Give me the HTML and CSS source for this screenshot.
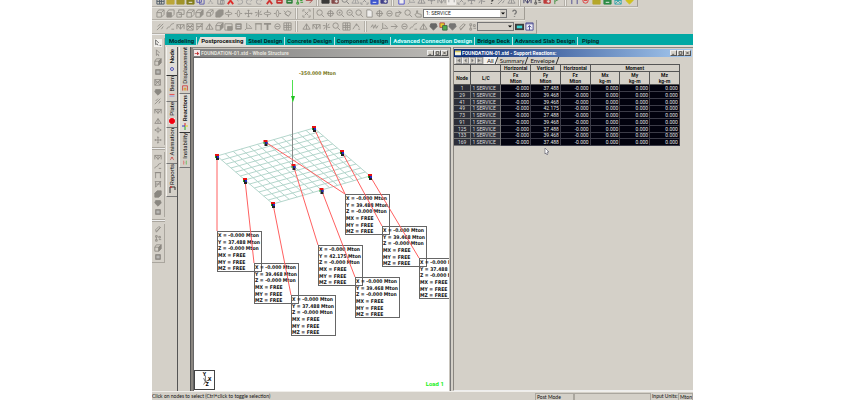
FILE: index.html
```html
<!DOCTYPE html>
<html lang="en">
<head>
<meta charset="utf-8">
<title>FOUNDATION-01.std - Support Reactions</title>
<link rel="stylesheet" href="styles.css">
</head>
<body>
<div class="app">
  <header class="bars">
    <div class="bar bar-top">
      <div class="group g16" data-icons="grid:#345 folder:#b8a020 folder:#998a10 save:#777000 copy:#44a cut:#999 paste:#888 cross:#e01010 undo:#999 redo:#999 redo:#999 cross:#d01818 box:#c01010 box:#107020 nodes:#109010 arrow:#a33"></div>
      <i class="sep"></i>
      <div class="group g7" data-icons="print:#222 camera:#733 lens:#777 tri:#999 frame:#888 save:#2340d0 camera:#2a2a80"></div>
      <i class="sep"></i>
      <div class="group g12" data-icons="page:#33c axis:#999 tri:#888 node:#888 truss:#888 lit:#999 frame:#888 move:#888 sym:#888 help:#222 slash:#888 tri:#888"></div>
      <i class="sep"></i>
      <div class="group g4" data-icons="truss:#225 nodes:#444 camera:#b22 flag:#383"></div>
      <i class="sep"></i>
      <div class="group g6b" data-icons="portal:#338 ring:#e02020 folder:#b0a010 save:#108030 mesh:#18a0a8 gem:#d0c000"></div>
    </div>
    <div class="bar bar-view">
      <div class="group g14" data-icons="cube cubeb cubes cube cubed cubeo solid rotx roty move sym rotx roty iso"></div>
      <i class="sep"></i>
      <div class="group g1" data-icons="frame"></div>
      <i class="line"></i>
      <div class="group g11" data-icons="lens target zoomin zoomout lens page target ring pan lens hand"></div>
      <div class="combo"><select aria-label="Load case"><option>1: SERVICE</option></select><svg class="chev" viewBox="0 0 6 6"><path d="M1 2h4L3 4z"/></svg></div>
      <div class="group g1 wide" data-icons="help:#666"></div>
    </div>
    <div class="bar bar-geom">
      <div class="group g14" data-icons="slash sweep truss mesh trussb tri cubed plate box axis portal tee ring grid"></div>
      <i class="sep"></i>
      <div class="group g6" data-icons="tri truss sym lens grid peak"></div>
      <i class="sep"></i>
      <div class="group g11" data-icons="wave axis arrow ring sweep tri gem:#555 traffic gem:#666 clip nodes"></div>
      <div class="combo small"><select aria-label="Group"><option></option></select><svg class="chev" viewBox="0 0 6 6"><path d="M1 2h4L3 4z"/></svg></div>
      <div class="group g2" data-icons="screen win"></div>
    </div>
  </header>

  <div class="body">
    <aside class="tools">
      <div class="stack" data-icons="pick:#555 cursor cubed box mesh gem slash truss tri rotx move"></div>
      <i class="hsep"></i>
      <div class="stack" data-icons="truss sweep portal trussb solid gem box"></div>
      <i class="hsep"></i>
      <div class="stack last" data-icons="clip nodes cubed box"></div>
    </aside>
    <div class="main">
      <nav class="modes">
        <a href="#">Modeling</a><a href="#" class="on">Postprocessing</a><a href="#">Steel Design</a><a href="#">Concrete Design</a><a href="#">Component Design</a><a href="#" class="hot">Advanced Connection Design</a><a href="#">Bridge Deck</a><a href="#">Advanced Slab Design</a><a href="#">Piping</a>
      </nav>
      <div class="work">
        <nav class="vtabs outer">
          <button class="on n1"><span>Node</span><svg viewBox="0 0 8 8"><circle cx="4" cy="4" r="1.5" fill="none" stroke="#55b"/></svg></button>
          <button class="n2"><span>Beam</span><svg viewBox="0 0 8 8"><path d="M1 3h6" stroke="#e33"/><path d="M1 5h6" stroke="#88d"/></svg></button>
          <button class="n2"><span>Plate</span><svg viewBox="0 0 8 8"><rect x="1" y="1" width="6" height="6" fill="#fff"/><circle cx="4" cy="4" r="3" fill="#f00010"/></svg></button>
          <button class="n4"><span>Animation</span><svg viewBox="0 0 8 8"><path d="M1 7l3-5 3 5M2 3h4" fill="none" stroke="#c33"/></svg></button>
          <button class="n5"><span>Reports</span><svg viewBox="0 0 8 8"><path d="M2 7V1h5v3" fill="none" stroke="#333"/><path d="M2 1h2" stroke="#e22"/></svg></button>
        </nav>
        <nav class="vtabs inner">
          <button class="m1"><span>Displacement</span><svg viewBox="0 0 8 8"><path d="M1 7V1h6v6" fill="none" stroke="#c33"/><path d="M3 7V4h2v3" fill="none" stroke="#d80"/></svg></button>
          <button class="on m2"><span>Reactions</span><svg viewBox="0 0 8 8"><path d="M4 1v3" stroke="#d22"/><path d="M4 4v4" stroke="#2a2"/><path d="M1 4h3" stroke="#33c"/><path d="M4 4h3" stroke="#dc2"/></svg></button>
          <button class="m3"><span>Instability</span><svg viewBox="0 0 8 8"><path d="M2 1v6" stroke="#e44"/><path d="M6 1v6" stroke="#3b3"/><path d="M2 4h4" stroke="#caa"/></svg></button>
        </nav>

        <section class="window model">
          <div class="title off">
            <svg class="appicon" viewBox="0 0 8 8"><rect width="8" height="8" fill="#f4e8e8"/><path d="M1 4h3V2l3 3-3 2V5H1z" fill="#c03030"/></svg>
            <h2>FOUNDATION-01.std - Whole Structure</h2>
            <div class="winbtns"><button aria-label="Minimize"><svg viewBox="0 0 6 6"><path d="M1 5h3"/></svg></button><button aria-label="Maximize"><svg viewBox="0 0 6 6"><path d="M1 1h4v4H1z"/></svg></button><button aria-label="Close"><svg viewBox="0 0 6 6"><path d="M1 1l4 4M5 1L1 5"/></svg></button></div>
          </div>
          <div class="canvas">
            <svg id="scene" class="scene"></svg>
            <svg class="triad" viewBox="0 0 20 20"><path d="M11 5v7l5-3M11 12l-2 3M9 8l2 4" fill="none" stroke="#666"/><text x="8" y="6">Y</text><text x="14" y="11">X</text><text x="11" y="17">Z</text></svg>
            <span class="load">Load 1</span>
          </div>
        </section>

        <section class="window results">
          <div class="title">
            <svg class="appicon" viewBox="0 0 8 8"><path d="M0 1h8v6H0z" fill="#f4f4e0"/><path d="M0 1h8v2H0z" fill="#d8c860"/></svg>
            <h2>FOUNDATION-01.std - Support Reactions:</h2>
            <div class="winbtns"><button aria-label="Minimize"><svg viewBox="0 0 6 6"><path d="M1 5h3"/></svg></button><button aria-label="Maximize"><svg viewBox="0 0 6 6"><path d="M1 1h4v4H1z"/></svg></button><button aria-label="Close"><svg viewBox="0 0 6 6"><path d="M1 1l4 4M5 1L1 5"/></svg></button></div>
          </div>
          <div class="sheets">
            <button class="nav" aria-label="First"><svg viewBox="0 0 6 6"><path d="M1 1v4M5 1L2 3l3 2z"/></svg></button><button class="nav" aria-label="Previous"><svg viewBox="0 0 6 6"><path d="M4 1L2 3l2 2z"/></svg></button><button class="nav" aria-label="Next"><svg viewBox="0 0 6 6"><path d="M2 1l2 2-2 2z"/></svg></button><button class="nav" aria-label="Last"><svg viewBox="0 0 6 6"><path d="M5 1v4M1 1l3 2-3 2z"/></svg></button>
            <a href="#" class="on">All</a><a href="#">Summary</a><a href="#">Envelope</a>
          </div>
          <table>
            <colgroup><col class="c-node"><col class="c-lc"><col><col><col><col><col><col></colgroup>
            <thead>
              <tr><th></th><th></th><th>Horizontal</th><th>Vertical</th><th>Horizontal</th><th colspan="3">Moment</th></tr>
              <tr class="units"><th>Node</th><th>L/C</th><th>Fx<br>Mton</th><th>Fy<br>Mton</th><th>Fz<br>Mton</th><th>Mx<br>kg-m</th><th>My<br>kg-m</th><th>Mz<br>kg-m</th></tr>
            </thead>
            <tbody>
              <tr><th>1</th><th>1 SERVICE</th><td>-0.000</td><td>37.488</td><td>-0.000</td><td>0.000</td><td>0.000</td><td>0.000</td></tr>
              <tr><th>29</th><th>1 SERVICE</th><td>-0.000</td><td>39.468</td><td>-0.000</td><td>0.000</td><td>0.000</td><td>0.000</td></tr>
              <tr><th>41</th><th>1 SERVICE</th><td>-0.000</td><td>39.468</td><td>-0.000</td><td>0.000</td><td>0.000</td><td>0.000</td></tr>
              <tr><th>49</th><th>1 SERVICE</th><td>-0.000</td><td>42.175</td><td>-0.000</td><td>0.000</td><td>0.000</td><td>0.000</td></tr>
              <tr><th>73</th><th>1 SERVICE</th><td>-0.000</td><td>37.488</td><td>-0.000</td><td>0.000</td><td>0.000</td><td>0.000</td></tr>
              <tr><th>91</th><th>1 SERVICE</th><td>-0.000</td><td>39.468</td><td>-0.000</td><td>0.000</td><td>0.000</td><td>0.000</td></tr>
              <tr><th>125</th><th>1 SERVICE</th><td>-0.000</td><td>37.488</td><td>-0.000</td><td>0.000</td><td>0.000</td><td>0.000</td></tr>
              <tr><th>133</th><th>1 SERVICE</th><td>-0.000</td><td>39.468</td><td>-0.000</td><td>0.000</td><td>0.000</td><td>0.000</td></tr>
              <tr><th>169</th><th>1 SERVICE</th><td>-0.000</td><td>37.488</td><td>-0.000</td><td>0.000</td><td>0.000</td><td>0.000</td></tr>
            </tbody>
          </table>
          <svg class="pointer" viewBox="0 0 6 9"><path d="M1 1v6l1-1 1 2 1-1-1-2h2z" fill="#fff" stroke="#556"  stroke-width=".6"/></svg>
        </section>
      </div>
    </div>
  </div>

  <footer class="status">
    <span class="msg">Click on nodes to select (Ctrl+click to toggle selection)</span>
    <span class="cell mode">Post Mode</span>
    <span class="cell blank"></span>
    <span class="lbl">Input Units:</span>
    <span class="cell unit">Mton-m</span>
  </footer>
</div>
<script src="app.js"></script>
</body>
</html>
```
FILE: styles.css
```css
* { box-sizing: border-box; }
body {
  margin: 0;
  background: #fff;
  color: #111;
  font-family: Roboto, "Liberation Sans", sans-serif;
  font-size: 5px;
}
button { margin: 0; padding: 0; border: 0; background: none; font: inherit; color: inherit; }
a { color: inherit; text-decoration: none; }
h2 { margin: 0; font: inherit; }
svg { display: block; }

.app {
  display: flex;
  flex-direction: column;
  height: 100vh;
  margin: 0 153px 0 152px;
  background: #d4d0c8;
  overflow: hidden;
}

/* toolbars */
.bar {
  display: flex;
  align-items: center;
  width: fit-content;
  height: 14px;
  padding: 0 2px 0 4px;
  border-right: 1px solid #a09c94;
  border-bottom: 1px solid #b4b0a8;
  box-shadow: 0 1px #e8e6e0;
}
.bar-top { height: 7px; align-items: flex-end; overflow: hidden; }
.bar-view { height: 13px; }
.group { display: flex; height: 12px; }
.group button { flex: 1; display: grid; place-items: center; }
.group svg { width: 9px; height: 9px; opacity: .85; }
.g1 { width: 10px; }
.g2 { width: 20px; }
.g4 { width: 39px; }
.g6 { width: 60px; }
.g6b { width: 66px; }
.g7 { width: 68px; }
.g11 { width: 107px; }
.g12 { width: 120px; }
.g14 { width: 136px; }
.g16 { width: 158px; }
.wide { width: 15px; }
.sep {
  flex: none;
  width: 3px;
  height: 11px;
  margin: 0 3px;
  border: 1px solid #b4b0a8;
  border-top: 0;
  border-bottom: 0;
  background: #eeece8;
}
.bar-top .sep { margin: 0 2px; }
.line { width: 1px; height: 11px; margin: 0 2px; background: #a8a49c; }
.combo {
  display: flex;
  position: relative;
  width: 84px;
  height: 9px;
  border: 1px solid #777;
  background: #fff;
}
.combo.small { width: 37px; background: #d4d0c8; }
.combo select {
  appearance: none;
  flex: 1;
  min-width: 0;
  padding: 0 2px;
  border: 0;
  border-radius: 0;
  background: none;
  color: #222;
  font: 5px/7px Roboto, sans-serif;
}
.chev {
  position: absolute;
  right: 0;
  top: 0;
  width: 6px;
  height: 7px;
  background: #d4d0c8;
  pointer-events: none;
}

.body { display: flex; flex: 1; min-height: 0; }
.tools { width: 13px; padding-top: 3px; border-top: 1px solid #eee; }
.stack { display: flex; flex-direction: column; height: 107px; border-right: 1px solid #aaa69e; }
.stack button { flex: 1; display: grid; place-items: center; }
.stack svg { width: 8px; height: 8px; }
.hsep { display: block; height: 3px; margin: 2px 0; border: 1px solid #aaa69e; border-width: 1px 0; background: #eee; }
.hsep + .stack { height: 65px; }
.stack.last { height: 39px; border-bottom: 1px solid #aaa69e; }

.main { display: flex; flex-direction: column; flex: 1; min-width: 0; }
.modes {
  display: flex;
  align-items: end;
  height: 11px;
  padding-left: 2px;
  background: #00a8a4;
  font-size: 6px;
  font-weight: 700;
  line-height: 8px;
  white-space: nowrap;
}
.modes a { padding: 0 2px; border-right: 1px solid #bfe6e4; color: #042c2c; }
.modes a.on {
  background: #e4e2dc;
  color: #111;
  clip-path: polygon(3px 0, 100% 0, 100% 100%, 0 100%);
  padding-left: 4px;
}
.modes a.hot { color: #d8ffff; }
.modes a:last-child { border: 0; padding-left: 4px; }

.work { display: flex; flex: 1; min-height: 0; border-top: 2px solid #dedbd5; }
.vtabs { display: flex; flex-direction: column; width: 13px; border-right: 1px solid #555; }
.vtabs button {
  display: flex;
  flex-direction: column;
  align-items: center;
  justify-content: flex-end;
  gap: 1px;
  margin-left: 1px;
  padding-bottom: 2px;
  border-left: 1px solid #f4f2ee;
  border-bottom: 1px solid #777;
  font-size: 6px;
}
.vtabs span { writing-mode: vertical-rl; transform: rotate(180deg); line-height: 8px; white-space: nowrap; }
.vtabs svg { width: 8px; height: 8px; }
.vtabs .on { background: #e0ddd6; font-family: Lato, sans-serif; font-weight: 700; border-bottom-color: #333; }
.n1 { height: 29px; }
.n2 { height: 26px; }
.n4 { height: 36px; }
.n5 { height: 33px; }
.m1 { height: 47px; }
.m2 { height: 39px; }
.m3 { height: 35px; }

/* document windows */
.window { display: flex; flex-direction: column; min-width: 0; border-left: 2px solid #8a8680; border-top: 1px solid #8a8680; }
.model { flex: 259; padding: 1px 1px 0 0; background: #c8c4bc; border-right: 1px solid #777; }
.results { position: relative; flex: 241; padding: 1px 1px 0 0; margin-left: 2px; border-bottom: 1px solid #eee; border-left-width: 1px; }
.title {
  display: flex;
  align-items: center;
  gap: 1px;
  height: 8px;
  flex: none;
  padding: 0 1px;
  background: linear-gradient(90deg, #0a2a74, #a6caf0);
  color: #fff;
  font-weight: 700;
  white-space: nowrap;
}
.title.off { background: linear-gradient(90deg, #808080, #bcbab6); color: #e4e2dc; }
.title h2 { flex: 1; }
.appicon { width: 6px; height: 6px; }
.winbtns { display: flex; }
.winbtns button { width: 7px; height: 6px; background: #d4d0c8; border: 1px solid #eee; border-right-color: #555; border-bottom-color: #555; }
.winbtns svg { width: 5px; height: 4px; }
.winbtns path { fill: none; stroke: #222; }
.canvas { position: relative; flex: 1; min-height: 0; border: 1px solid #666; border-width: 1px 0 0 1px; background: #fff; overflow: hidden; }
.scene { width: 100%; height: 100%; }
.scene text { font: 700 5px "DejaVu Sans Condensed", "Liberation Sans", sans-serif; fill: #111; }
.scene .force { fill: #77771a; }
.scene .mesh { stroke: #b4d6cc; stroke-width: 1; fill: none; }
.scene .leader { stroke: #ff6060; stroke-width: 1; }
.scene .frame { fill: none; stroke: #666; }
.triad { position: absolute; left: 0; bottom: 1px; width: 21px; height: 20px; border: 1px solid #444; background: #fff; }
.triad text { font-size: 6px; font-weight: 700; }
.load { position: absolute; right: 5px; bottom: 4px; color: #20f020; font-size: 6px; font-weight: 700; }

.sheets { display: flex; height: 7px; flex: none; padding-left: 1px; font: 6px/7px Lato, sans-serif; }
.sheets .nav { width: 7px; height: 7px; border: 1px solid #999; border-left-color: #eee; }
.sheets .nav svg { width: 5px; height: 5px; }
.sheets path { fill: #777; stroke: #777; stroke-width: .5; }
.sheets a { position: relative; padding: 0 3px; }
.sheets a::after { content: ""; position: absolute; top: 0; right: 0; width: 1px; height: 7px; background: #333; transform: skewX(-20deg); }
.sheets a.on { background: #f4f2ee; margin-left: 1px; }

table {
  width: 226px;
  max-width: 100%;
  table-layout: fixed;
  border-collapse: collapse;
  border: 1px solid #555;
  border-left: 0;
  line-height: 6px;
}
.c-node { width: 17px; }
.c-lc { width: 30px; }
th, td { padding: 0; height: 7px; overflow: hidden; white-space: nowrap; border: 1px solid #777; border-width: 0 1px 1px 0; }
thead th { font-weight: 700; border-color: #555; }
.units { height: 13px; }
tbody th { background: #2c2e38; color: #dcdcdc; font-weight: 400; border-color: #777; }
tbody th + th { text-align: left; padding-left: 1px; }
tbody td { background: #02020e; color: #e4e4e4; text-align: right; padding-right: 1px; border-color: #3c3c48; }
tbody tr:nth-child(4n) > * { height: 6px; line-height: 5px; }
.pointer { position: absolute; left: 90px; top: 99px; width: 6px; height: 9px; }

.status { display: flex; align-items: center; height: 9px; flex: none; border-top: 1px solid #f0eeea; font-family: Lato, sans-serif; line-height: 7px; white-space: nowrap; }
.msg { flex: 1; }
.cell { height: 7px; padding-left: 1px; border: 1px solid #aaa69e; border-width: 1px 1px 0 1px; overflow: hidden; line-height: 6px; }
.mode { width: 39px; }
.blank { width: 77px; }
.lbl { width: 27px; padding-left: 1px; }
.unit { width: 15px; }
```
FILE: app.js
```js
// Icon shapes on a 10 x 10 grid, drawn with the current colour.
const shapes = {
  grid: '<path d="M1 1h8v8H1zM1 4h8M1 6h8M4 1v8M6 1v8"/>',
  folder: '<path class="f" d="M1 3h3l1 1h4v5H1z"/><path d="M3 6h6"/>',
  save: '<path class="f" d="M1 1h8v8H1z"/><path d="M3 7h4" stroke="#fff"/>',
  copy: '<path d="M1 1h5v6H1zM4 3h5v6H4z"/>',
  cut: '<path d="M3 1l3 6M7 1L4 7M2 8h2M6 8h2"/>',
  paste: '<path d="M2 2h5v7H2zM5 5h4v4H5z"/>',
  cross: '<path d="M2 1l6 8M8 1L2 9" stroke-width="2"/>',
  undo: '<path d="M2 4h4a2 2 0 0 1 0 5H3M4 2L2 4l2 2"/>',
  redo: '<path d="M8 4H4a2 2 0 0 0 0 5h3M6 2l2 2-2 2"/>',
  box: '<path class="f" d="M2 2h6v6H2z"/><path d="M3 4h4M3 6h4" stroke="#ddd"/>',
  nodes: '<path d="M2 2h2v2H2zM6 3h2v2H6zM2 7h2v2H2zM6 7h3M3 4v3"/>',
  arrow: '<path d="M1 5h7M5 2l3 3-3 3"/>',
  print: '<path class="f" d="M1 4h8v4H1z"/><path d="M3 4V1h4v3"/>',
  camera: '<path class="f" d="M1 3h7v5H1z"/><circle cx="6" cy="6" r="2" fill="#ddd"/>',
  lens: '<circle cx="4" cy="4" r="3"/><path d="M6 6l3 3"/>',
  frame: '<path d="M1 3V1h2M7 1h2v2M9 7v2H7M3 9H1V7M3 3l4 4M7 3L3 7"/>',
  page: '<path d="M2 1h4l2 2v6H2z" fill="#f4f4f4"/>',
  axis: '<path d="M3 1v6h6M3 7L1 9M5 3l3 3"/>',
  tri: '<path d="M1 8l4-6 4 6zM5 2v6"/>',
  node: '<path d="M5 1v3M5 7v2M1 5h2M7 5h2"/><circle class="f" cx="5" cy="5" r="1"/>',
  truss: '<path d="M1 8V3h8v5M1 3l4 5 4-5M5 3v5"/>',
  trussb: '<path d="M1 2h8M2 2v7M8 2v7M2 5h6M2 9l6-7"/>',
  lit: '<path d="M0 0h10v10H0z" fill="#f4f2ee" stroke="none"/><path d="M2 7V2h6v5"/>',
  move: '<path d="M5 1v8M1 5h8M4 2l1-1 1 1M4 8l1 1 1-1M2 4L1 5l1 1M8 4l1 1-1 1"/>',
  sym: '<path d="M5 1v8M1 4h3M6 6h3M2 8l2-3M8 2L6 5"/>',
  help: '<path d="M3 3a2 2 0 1 1 3 2L5 6M5 8v1" stroke-width="1.5"/>',
  slash: '<path d="M1 9l7-7M2 5l3-3M6 8l2-3"/>',
  flag: '<path d="M2 9V1l6 2-6 3"/>',
  portal: '<path d="M2 9V2h6v7M1 2h8"/>',
  ring: '<circle cx="5" cy="5" r="3"/><path d="M3 5h4"/>',
  mesh: '<path d="M1 2h7v7H1zM1 9l7-7M1 5h7M1 2l7 7"/>',
  gem: '<path class="f" d="M2 2h6l1 3-4 4-4-4z"/>',
  cube: '<path d="M1 4h5v5H1zM1 4l2-3h6v5L6 9M6 4l3-3"/>',
  cubeb: '<path class="f" d="M1 4h5v5H1z"/><path d="M1 4l2-3h6v5L6 9"/>',
  cubes: '<path d="M1 4h5v5H1zM3 1h6v5H6M3 1v3M3 6h3"/>',
  cubed: '<path d="M1 4h5v5H1zM1 4l2-3h6L6 4"/><path class="f" d="M6 4l3-3v5L6 9z"/>',
  cubeo: '<path d="M2 4l3-3h4v4L6 8H2zM2 4h4v4M6 4l3-3"/>',
  solid: '<path class="f" d="M1 4l3-3h5v5L6 9H1z"/>',
  rotx: '<path d="M1 5c2-2 6-2 8 0-2 2-6 2-8 0M5 1v3M5 6v3"/>',
  roty: '<path d="M5 1c-2 2-2 6 0 8 2-2 2-6 0-8M1 5h2M7 5h2"/>',
  iso: '<path d="M2 5l3-3 4 2-3 4zM2 5l4 3M1 2l2 2"/>',
  target: '<circle cx="5" cy="5" r="3"/><path d="M5 1v8M1 5h8"/>',
  zoomin: '<circle cx="4" cy="4" r="3"/><path d="M6 6l3 3M3 4h2M4 3v2"/>',
  zoomout: '<circle cx="4" cy="4" r="3"/><path d="M6 6l3 3M3 4h2"/>',
  pan: '<path d="M2 8V4h6M5 2l3 2-3 3M2 8h4"/>',
  hand: '<path d="M3 9L1 6l2-1V2h1v3l4 1v3z"/>',
  sweep: '<path d="M1 8c1-4 3-1 4-4s3-1 4-3M6 8h3"/>',
  plate: '<path d="M1 2h8v7H1z"/><path class="f" d="M4 5h5v4H4z"/>',
  tee: '<path d="M1 2h8M5 2v7" stroke-width="2"/>',
  peak: '<path d="M1 8l4-6 3 4M5 2v2M7 8h2"/>',
  wave: '<path d="M1 6l2-3 1 4 2-4 1 4 2-3"/>',
  traffic: '<path d="M1 1h5v5H1z" fill="#e8d010" stroke="#a33"/><path d="M4 4h5v5H4z" fill="#38a838" stroke="#253"/>',
  clip: '<path d="M3 8l5-5M2 6l4-4 2 1-5 6z"/>',
  screen: '<path d="M0 2h10v7H0z" fill="#222" stroke="none"/><path d="M2 4h6v3H2z" fill="#20d8d8" stroke="none"/>',
  win: '<path d="M1 1h8v8H1z" fill="#f4f4ff" stroke="#338"/><path d="M1 2h8M5 4v5M3 6l2-2 2 2" stroke="#338"/>',
  pick: '<path d="M0 0h10v10H0z" fill="#f4f2ee" stroke="none"/><path d="M2 1v6l2-1 1 2M2 1l4 4M7 8h2"/>',
  cursor: '<path d="M3 1v7l2-2 1 3M3 1l4 4"/>'
};

document.querySelectorAll('[data-icons]').forEach(host => {
  host.innerHTML = host.dataset.icons.split(' ').map(item => {
    const [name, colour = '#8a8780'] = item.split(':');
    return `<button aria-label="${name}"><svg viewBox="0 0 10 10" fill="none" stroke="${colour}">` +
      shapes[name].replaceAll('class="f"', `fill="${colour}"`) + '</svg></button>';
  }).join('');
});

// Foundation mat: 12 x 12 plates between three corners.
const origin = [23, 98], right = [97, -28], down = [56, 48], cells = 12;
const at = (u, v) => [origin[0] + right[0] * u + down[0] * v, origin[1] + right[1] * u + down[1] * v];
let mesh = '';
for (let i = 0; i <= cells; i++) {
  const t = i / cells;
  mesh += `M${at(t, 0)}L${at(t, 1)}M${at(0, t)}L${at(1, t)}`;
}

// Support position on the mat, reaction box corner, vertical reaction.
const supports = [
  [0, 0, 23, 173, '37.488'], [0, .5, 60, 205, '39.468'], [0, 1, 97, 237, '37.488'],
  [.5, .5, 124, 187, '42.175'], [.5, 1, 161, 219, '39.468'], [.5, 0, 151, 136, '39.488'],
  [1, 0, 151, 136, ''], [1, .5, 188, 168, '39.468'], [1, 1, 225, 200, '37.488']
];
let out = `<path class="mesh" d="${mesh}"/>
  <path d="M98.5 22V108" stroke="#888"/><path d="M98.5 22V44" stroke="#50e050"/>
  <path d="M97 38h4l-2 6z" fill="#20c020"/><text class="force" x="105" y="17">-350.000 Mton</text>`;
supports.forEach(([u, v, x, y, fy]) => {
  const [px, py] = at(u, v);
  if (fy) {
    out += `<rect class="frame" x="${x + .5}" y="${y + .5}" width="44" height="40"/>`;
    ['X = -0.000 Mton', `Y = ${fy} Mton`, 'Z = -0.000 Mton', 'MX = FREE', 'MY = FREE', 'MZ = FREE']
      .forEach((line, i) => { out += `<text x="${x + 1}" y="${y + 6 + Math.round(i * 20 / 3)}">${line}</text>`; });
  }
  out += `<path class="leader" d="M${px} ${py}L${x} ${y}"/>
    <path d="M${px - 1} ${py}h3v4h-3z" fill="#222"/><path d="M${px - 2} ${py - 2}h4v2h-4z" fill="#e81010"/>
    <path d="M${px} ${py}h2v2h-2z" fill="#2828c0"/><path d="M${px - 2} ${py}h1v2h-1z" fill="#20a020"/>`;
});
document.getElementById('scene').innerHTML = out;
```
